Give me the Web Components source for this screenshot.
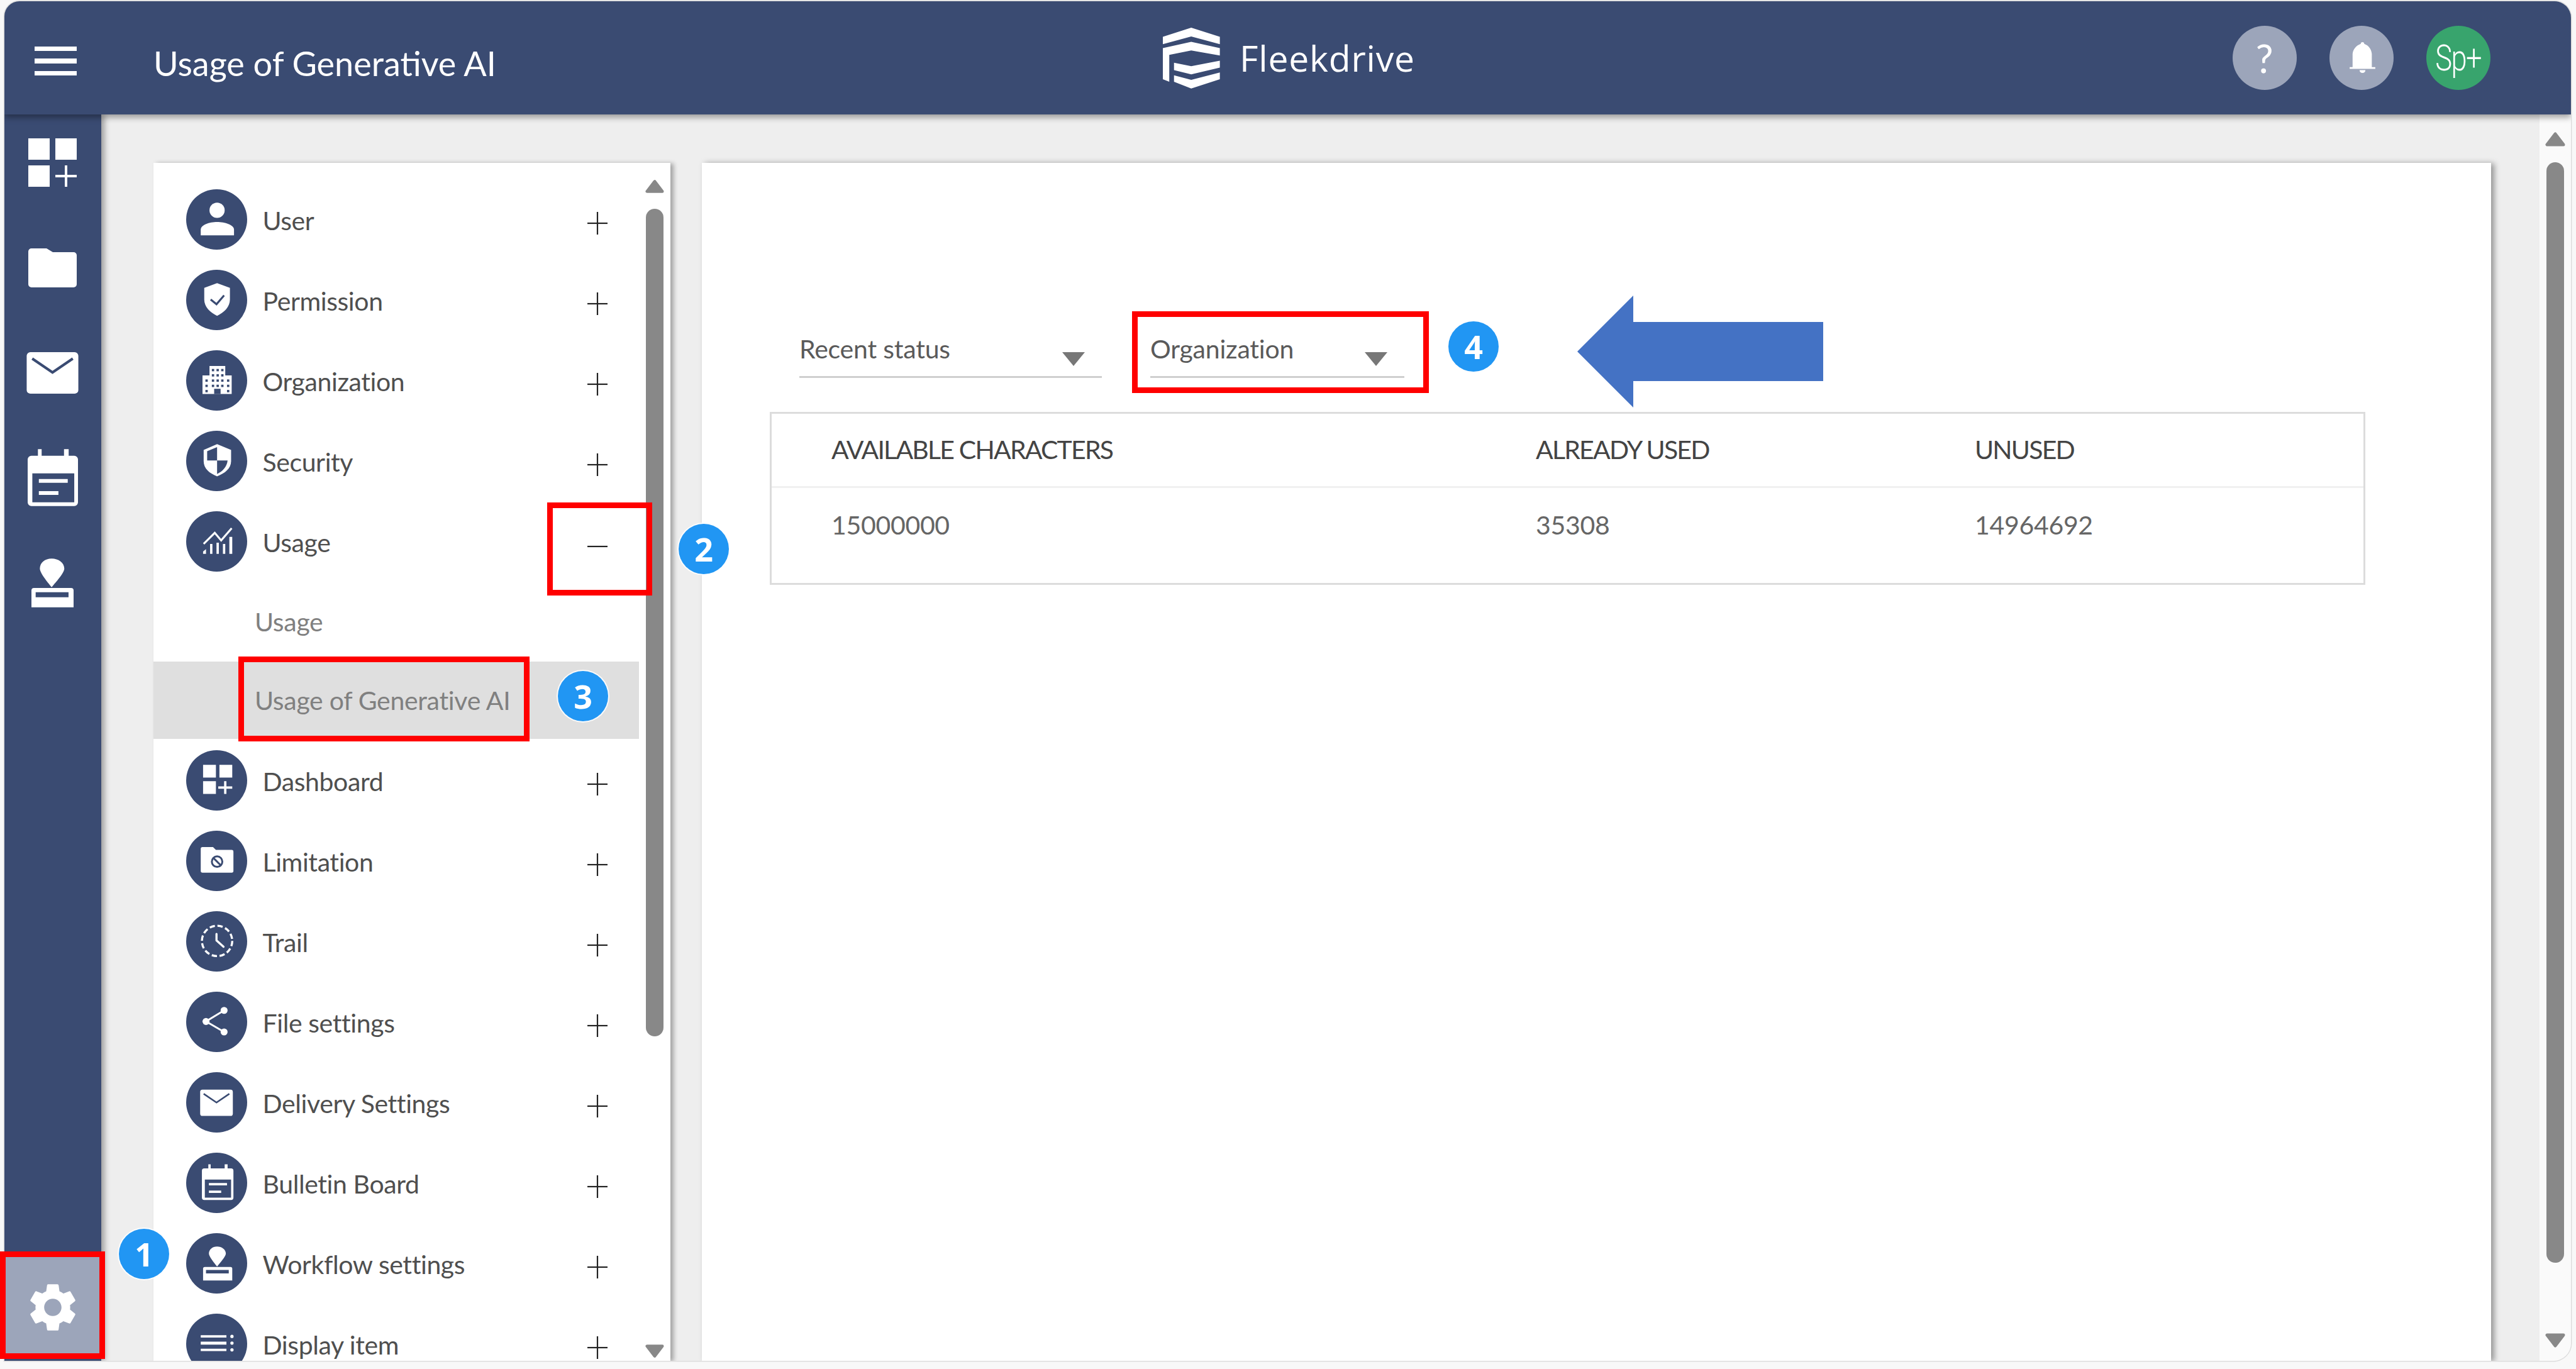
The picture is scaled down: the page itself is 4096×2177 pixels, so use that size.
<!DOCTYPE html>
<html>
<head>
<meta charset="utf-8">
<title>Usage of Generative AI</title>
<style>
  html, body { margin: 0; height: 100%; overflow: hidden; background: #f8f8f8; }
  body { font-family: Lato, "Noto Sans", sans-serif; }
</style>
</head>
<body>
<fd-app>
  <fd-header slot="header">Usage of Generative AI</fd-header>
  <fd-rail slot="rail"></fd-rail>

  <fd-menu-panel slot="menu">
    <fd-menu-item icon="user">User</fd-menu-item>
    <fd-menu-item icon="permission">Permission</fd-menu-item>
    <fd-menu-item icon="organization">Organization</fd-menu-item>
    <fd-menu-item icon="security">Security</fd-menu-item>
    <fd-menu-item icon="usage" open>Usage</fd-menu-item>
    <fd-sub-item>Usage</fd-sub-item>
    <fd-sub-item active>Usage of Generative AI</fd-sub-item>
    <fd-menu-item icon="dashboard">Dashboard</fd-menu-item>
    <fd-menu-item icon="limitation">Limitation</fd-menu-item>
    <fd-menu-item icon="trail">Trail</fd-menu-item>
    <fd-menu-item icon="share">File settings</fd-menu-item>
    <fd-menu-item icon="mail">Delivery Settings</fd-menu-item>
    <fd-menu-item icon="calendar">Bulletin Board</fd-menu-item>
    <fd-menu-item icon="stamp">Workflow settings</fd-menu-item>
    <fd-menu-item icon="display">Display item</fd-menu-item>
  </fd-menu-panel>

  <fd-content-panel slot="content">
    <fd-select slot="filters" style="width:481px">Recent status</fd-select>
    <fd-select slot="filters" style="width:404px">Organization</fd-select>
    <fd-usage-table></fd-usage-table>
  </fd-content-panel>

  <fd-scrollbar slot="scroll" style="--bg:#fafafa;--top:28px;--arrow:23px;--gap:25px;--thumb:1750px;--bottom:21px;--aw:32px"></fd-scrollbar>

  <fd-callout style="left:0;top:1990px;width:167px;height:171px"></fd-callout>
  <fd-callout style="left:870px;top:799px;width:167px;height:148px"></fd-callout>
  <fd-callout style="left:379px;top:1044px;width:463px;height:135px"></fd-callout>
  <fd-callout style="left:1800px;top:495px;width:472px;height:130px"></fd-callout>

  <fd-badge style="left:189px;top:1954px">1</fd-badge>
  <fd-badge style="left:1079px;top:833px">2</fd-badge>
  <fd-badge style="left:887px;top:1067px">3</fd-badge>
  <fd-badge style="left:2303px;top:511px">4</fd-badge>

  <fd-arrow style="left:2508px;top:470px"></fd-arrow>
</fd-app>

<script>
const NAVY = '#3a4b72';

// glyphs are drawn on a 104 box, the size of the round menu icon in the reference
const ICONS = {
  user: `<circle cx="53" cy="36" r="13" fill="#fff"/><path d="M25 79V69c0-8 15-13 28-13s29 5 29 13v10z" fill="#fff"/>`,
  permission: `<path d="M53 23l22 8v20c0 13-10 22-22 28-12-6-22-15-22-28V31z" fill="#fff"/><path d="M42 51l10 8 13-15" fill="none" stroke="${NAVY}" stroke-width="3.4"/>`,
  organization: `<path d="M40 27h27v16h11v32H28V43h12z" fill="#fff"/>
    <g fill="${NAVY}"><rect x="44" y="32" width="4" height="4"/><rect x="52" y="32" width="4" height="4"/><rect x="60" y="32" width="4" height="4"/>
    <rect x="44" y="41" width="4" height="4"/><rect x="52" y="41" width="4" height="4"/><rect x="60" y="41" width="4" height="4"/>
    <rect x="33" y="50" width="4" height="4"/><rect x="44" y="50" width="4" height="4"/><rect x="52" y="50" width="4" height="4"/><rect x="60" y="50" width="4" height="4"/><rect x="70" y="50" width="4" height="4"/>
    <rect x="33" y="59" width="4" height="4"/><rect x="44" y="59" width="4" height="4"/><rect x="52" y="59" width="4" height="4"/><rect x="60" y="59" width="4" height="4"/><rect x="70" y="59" width="4" height="4"/>
    <rect x="33" y="68" width="4" height="4"/><rect x="48" y="66" width="11" height="9"/><rect x="70" y="68" width="4" height="4"/></g>`,
  security: `<path d="M53 23l24 10v19c0 13-11 21-24 26-13-5-23-13-23-26V33z" fill="#fff"/><path d="M53 28l-17 7v16h17zM53 51h18c-1 11-9 19-18 23z" fill="${NAVY}"/>`,
  usage: `<path d="M30 56l19-19 11 13 18-21" fill="none" stroke="#fff" stroke-width="3.4"/>
    <path d="M29 73v-4l5-4v8zM41 73V56h4v17zM52 73V54h4v19zM63 73V56h4v17zM74 73V44h5v29z" fill="#fff"/>`,
  dashboard: `<path d="M29 25h22v22H29zM57 25h22v22H57zM29 53h22v22H29zM65 53h4v9h10v4H69v9h-4v-9H55v-4h10z" fill="#fff"/>`,
  limitation: `<path d="M28 28h18l5 5h27a3 3 0 0 1 3 3v33a3 3 0 0 1-3 3H28a3 3 0 0 1-3-3V31a3 3 0 0 1 3-3z" fill="#fff"/>
    <circle cx="53" cy="53" r="9" fill="none" stroke="${NAVY}" stroke-width="3.2"/><path d="M47 47l12 12" stroke="${NAVY}" stroke-width="3.2"/>`,
  trail: `<circle cx="53" cy="51" r="26" fill="none" stroke="#fff" stroke-width="3.6" stroke-dasharray="9 4.6"/><path d="M52 39v11l12 11" fill="none" stroke="#fff" stroke-width="3.6" stroke-linecap="round"/>`,
  share: `<path d="M65 32L34 51l31 18" fill="none" stroke="#fff" stroke-width="3.2"/><circle cx="65" cy="32" r="6" fill="#fff"/><circle cx="34" cy="51" r="6" fill="#fff"/><circle cx="65" cy="69" r="6" fill="#fff"/>`,
  mail: `<path d="M28 30h48a4 4 0 0 1 4 4v37a4 4 0 0 1-4 4H28a4 4 0 0 1-4-4V34a4 4 0 0 1 4-4z" fill="#fff"/><path d="M30 37l22 15 22-15" fill="none" stroke="${NAVY}" stroke-width="2.8"/>`,
  calendar: `<path d="M38 20h4v7h24v-7h5v7h6a4 4 0 0 1 4 4v46a4 4 0 0 1-4 4H31a4 4 0 0 1-4-4V31a4 4 0 0 1 4-4h7z" fill="#fff"/><path d="M32 46h45v31H32z" fill="${NAVY}"/><path d="M39 52h31v4H39zM39 65h21v4H39z" fill="#fff"/>`,
  stamp: `<path d="M53 23c8 0 15 5 15 12 0 5-10 16-15 22-5-6-14-17-14-22 0-7 6-12 14-12z" fill="#fff"/><path d="M32 58h44a3 3 0 0 1 3 3v20H29V61a3 3 0 0 1 3-3z" fill="#fff"/><path d="M34 63h39v6H34z" fill="${NAVY}"/>`,
  display: `<path d="M25 37h44v4H25zM25 48h44v5H25zM25 60h44v4H25z" fill="#fff"/><circle cx="78.500" cy="39" r="2.800" fill="#fff"/><circle cx="78.500" cy="50.500" r="2.800" fill="#fff"/><circle cx="78.500" cy="62" r="2.800" fill="#fff"/>`
};

class FdApp extends HTMLElement {
  connectedCallback() {
    this.attachShadow({ mode: 'open' });
    this.shadowRoot.innerHTML = `
      <style>
        :host { display: block; position: relative; width: 4096px; height: 2177px; overflow: hidden; }
        .window {
          margin: 2px 0 0 6.5px;
          width: 4081px;
          height: 2162px;
          display: grid;
          grid-template-columns: 154.5px 1fr;
          grid-template-rows: 179.5px 1fr;
          border-radius: 24px 26px 28px 0;
          overflow: hidden;
          background: #eeeeee;
          box-shadow: 0 0 0 1.5px #dddddd;
        }
        .header { grid-column: 1 / 3; position: relative; z-index: 3; display: flex; }
        .rail { position: relative; z-index: 2; display: flex; }
        .main { display: flex; min-height: 0; }
        .menu { display: flex; margin: 77px 0 0 83px; }
        .content { display: flex; margin: 77px 0 0 50.5px; }
        .scroll { display: flex; margin-left: 77px; }
      </style>
      <div class="window">
        <div class="header"><slot name="header"></slot></div>
        <div class="rail"><slot name="rail"></slot></div>
        <div class="main">
          <div class="menu"><slot name="menu"></slot></div>
          <div class="content"><slot name="content"></slot></div>
          <div class="scroll"><slot name="scroll"></slot></div>
        </div>
      </div>
      <slot></slot>
    `;
  }
}

class FdHeader extends HTMLElement {
  connectedCallback() {
    this.attachShadow({ mode: 'open' });
    this.shadowRoot.innerHTML = `
      <style>
        :host {
          flex: 1;
          display: flex;
          align-items: center;
          position: relative;
          background: ${NAVY};
          color: #fff;
          box-shadow: 0 5px 9px rgba(0,0,0,.35);
        }
        .burger { width: 67px; margin: 10px 0 0 48.500px; display: flex; flex-direction: column; gap: 12px; }
        .burger i { display: block; height: 7.500px; background: #fff; }
        h1 { margin: 18px 0 0 122px; font: 400 54px/64px Lato, sans-serif; white-space: nowrap; }
        .logo { position: absolute; left: 1842.500px; top: 41px; display: flex; align-items: center; gap: 31px; }
        .logo svg { width: 91px; height: 98.500px; display: block; }
        .logo span { font: 400 57px/70px "Open Sans", sans-serif; letter-spacing: .8px; }
        .tools { margin-left: auto; margin-right: 128px; display: flex; gap: 52px; }
        .tool {
          width: 102px; height: 102px; border-radius: 50%;
          background: #9ca5ba;
          display: flex; align-items: center; justify-content: center;
          font: 400 62px/1 Lato, sans-serif;
        }
        .tool.me { background: #38a46d; }
        .tool.me span { font: 300 58px/1 Roboto, sans-serif; letter-spacing: -2px; transform: scaleX(.78); white-space: nowrap; }
        .tool svg { width: 41px; height: 50px; margin-left: 4px; }
      </style>
      <div class="burger"><i></i><i></i><i></i></div>
      <h1><slot></slot></h1>
      <div class="logo">
        <svg viewBox="0 0 98 106" fill="#fff">
          <path d="M48.600 1L0 16.700v12.600L48.600 16l49 13.300V16.700z"/>
          <path d="M48.600 25.300L0 36v53.300l11 4.400v-46L48.600 40l49 8.700V36z"/>
          <path d="M19.100 61l29.500 6 49-9.300v11.600L48.600 81l-29.500-7.300z"/>
          <path d="M19.100 82.700l29.500 7.600 49-12.600v11.600l-49 16-29.500-11.600z"/>
        </svg>
        <span>Fleekdrive</span>
      </div>
      <div class="tools">
        <div class="tool">?</div>
        <div class="tool">
          <svg viewBox="0 0 44 54" fill="#fff"><path d="M22 0c2 0 3 1 3 3 8 3 12 9 13 17v23h6v3H0v-3h5V20C6 12 11 6 19 3c0-2 1-3 3-3z"/><path d="M17 48h10c0 3-2 5-5 5s-5-2-5-5z"/></svg>
        </div>
        <div class="tool me"><span>Sp+</span></div>
      </div>
    `;
  }
}

class FdRail extends HTMLElement {
  connectedCallback() {
    this.attachShadow({ mode: 'open' });
    this.shadowRoot.innerHTML = `
      <style>
        :host {
          flex: 1;
          display: flex;
          flex-direction: column;
          background: ${NAVY};
          box-shadow: 5px 0 9px rgba(0,0,0,.35);
        }
        .item { height: 154px; margin-bottom: 13px; display: flex; align-items: center; justify-content: center; }
        .gear { margin-top: auto; margin-bottom: 12px; height: 153px; background: #9ca5ba; }
        svg { display: block; }
      </style>
      <div class="item">
        <svg width="77" height="77" viewBox="0 0 77 77" fill="#fff"><path d="M0 0h34v34H0zM43 0h34v34H43zM0 43h34v34H0zM58 43h4v15h15v4H62v15h-4V62H43v-4h15z"/></svg>
      </div>
      <div class="item">
        <svg width="77" height="62" viewBox="0 0 77 62" fill="#fff"><path d="M5 0h24l10 6h33a5 5 0 0 1 5 5v46a5 5 0 0 1-5 5H5a5 5 0 0 1-5-5V5a5 5 0 0 1 5-5z"/></svg>
      </div>
      <div class="item"><svg width="83" height="66" viewBox="24 30 56 45">${ICONS.mail}</svg></div>
      <div class="item"><svg width="80" height="91" viewBox="27 20 54 61">${ICONS.calendar}</svg></div>
      <div class="item"><svg width="67" height="78" viewBox="29 23 50 58">${ICONS.stamp}</svg></div>
      <div class="item gear">
        <svg width="92" height="92" viewBox="0 0 24 24" fill="#fff" style="margin-top:7px"><path d="M19.140 12.940c.04-.3.06-.61.06-.94 0-.32-.02-.64-.07-.94l2.030-1.580a.49.49 0 0 0 .12-.61l-1.920-3.320a.488.488 0 0 0-.59-.22l-2.390.96c-.5-.38-1.030-.7-1.620-.94l-.36-2.540a.484.484 0 0 0-.48-.41h-3.840c-.24 0-.43.17-.47.41l-.36 2.540c-.59.24-1.130.57-1.620.94l-2.390-.96c-.22-.08-.47 0-.59.22L2.740 8.870c-.12.21-.08.47.12.61l2.030 1.580c-.05.3-.09.63-.09.94s.02.64.07.94l-2.030 1.580a.49.49 0 0 0-.12.61l1.920 3.320c.12.22.37.29.59.22l2.390-.96c.5.38 1.030.7 1.620.94l.36 2.540c.05.24.24.41.48.41h3.840c.24 0 .44-.17.47-.41l.36-2.540c.59-.24 1.130-.56 1.620-.94l2.390.96c.22.08.47 0 .59-.22l1.920-3.320c.12-.22.07-.47-.12-.61l-2.010-1.580zM12 15.600c-1.980 0-3.600-1.620-3.600-3.600s1.620-3.600 3.600-3.600 3.600 1.620 3.600 3.600-1.620 3.600-3.600 3.600z"/></svg>
      </div>
    `;
  }
}

class FdMenuPanel extends HTMLElement {
  connectedCallback() {
    this.attachShadow({ mode: 'open' });
    this.shadowRoot.innerHTML = `
      <style>
        :host {
          width: 821.5px;
          display: flex;
          background: #fff;
          box-shadow: 5px 1px 7px rgba(0,0,0,.32);
          overflow: hidden;
        }
        .list { width: 772px; padding-top: 26.5px; box-sizing: border-box; display: flex; flex-direction: column; flex: none; }
      </style>
      <div class="list"><slot></slot></div>
      <fd-scrollbar style="--bg:#fff;--top:24px;--arrow:27px;--gap:22px;--thumb:1316px;--bottom:2px;--aw:30px;width:49.5px"></fd-scrollbar>
    `;
  }
}

class FdMenuItem extends HTMLElement {
  connectedCallback() {
    const open = this.hasAttribute('open');
    this.attachShadow({ mode: 'open' });
    this.shadowRoot.innerHTML = `
      <style>
        :host {
          display: flex;
          align-items: center;
          flex: none;
          height: 128px;
          padding: 0 50px 0 52px;
          color: #4f4f4f;
          font: 400 41px/50px Lato, sans-serif;
          letter-spacing: -.4px;
        }
        .dot { width: 96.5px; height: 96.5px; border-radius: 50%; background: ${NAVY}; flex: none; }
        svg.glyph { display: block; width: 96.5px; height: 96.5px; }
        .label { margin: 3px 0 0 25px; flex: 1; }
        .toggle { width: 32px; height: 36px; margin-top: ${open ? 16 : 12}px; flex: none; }
      </style>
      <div class="dot"><svg class="glyph" viewBox="0 0 104 104">${ICONS[this.getAttribute('icon')]}</svg></div>
      <div class="label"><slot></slot></div>
      <svg class="toggle" viewBox="0 0 32 36" stroke="#222" stroke-width="2.2">
        <path d="M0 18h32"/>${open ? '' : '<path d="M16 0v36"/>'}
      </svg>
    `;
  }
}

class FdSubItem extends HTMLElement {
  connectedCallback() {
    const active = this.hasAttribute('active');
    this.attachShadow({ mode: 'open' });
    this.shadowRoot.innerHTML = `
      <style>
        :host {
          display: flex;
          align-items: center;
          flex: none;
          height: ${active ? 123 : 127}px;
          margin-bottom: ${active ? 2 : 0}px;
          padding-left: 161px;
          color: #808080;
          background: ${active ? '#dfdfdf' : 'transparent'};
          font: 400 41px/50px Lato, sans-serif;
          letter-spacing: -.3px;
        }
      </style>
      <slot></slot>
    `;
  }
}

class FdScrollbar extends HTMLElement {
  connectedCallback() {
    this.attachShadow({ mode: 'open' });
    this.shadowRoot.innerHTML = `
      <style>
        :host {
          display: flex;
          flex-direction: column;
          align-items: center;
          flex: none;
          width: 49.5px;
          box-sizing: border-box;
          padding: var(--top) 0 var(--bottom);
          background: var(--bg);
        }
        svg { width: var(--aw); height: var(--arrow); display: block; flex: none; }
        .thumb { width: 28px; height: var(--thumb); margin-top: var(--gap); border-radius: 14px; background: #888888; flex: none; }
        .down { margin-top: auto; }
      </style>
      <svg viewBox="0 0 32 23"><path d="M16 3L3 20h26z" fill="#888" stroke="#888" stroke-width="5" stroke-linejoin="round"/></svg>
      <div class="thumb"></div>
      <svg class="down" viewBox="0 0 32 23"><path d="M3 3h26L16 20z" fill="#888" stroke="#888" stroke-width="5" stroke-linejoin="round"/></svg>
    `;
  }
}

class FdContentPanel extends HTMLElement {
  connectedCallback() {
    this.attachShadow({ mode: 'open' });
    this.shadowRoot.innerHTML = `
      <style>
        :host {
          width: 2845px;
          display: block;
          box-sizing: border-box;
          padding: 278.5px 200px 0 108px;
          background: #fff;
          box-shadow: 5px 1px 9px rgba(0,0,0,.38);
        }
        .filters { display: flex; gap: 77px; margin: 0 0 53.5px 47px; }
      </style>
      <div class="filters"><slot name="filters"></slot></div>
      <slot></slot>
    `;
  }
}

class FdSelect extends HTMLElement {
  connectedCallback() {
    this.attachShadow({ mode: 'open' });
    this.shadowRoot.innerHTML = `
      <style>
        :host {
          display: flex;
          justify-content: space-between;
          box-sizing: border-box;
          height: 64px;
          border-bottom: 3px solid #cfcfcf;
          color: #5a5a5a;
          font: 400 41px/36px Lato, sans-serif;
          letter-spacing: -.2px;
        }
        .caret { width: 36px; height: 22px; margin: 23px 27px 0 0; }
      </style>
      <slot></slot>
      <svg class="caret" viewBox="0 0 36 22"><path d="M0 0h36L18 22z" fill="#777"/></svg>
    `;
  }
}

class FdUsageTable extends HTMLElement {
  connectedCallback() {
    this.attachShadow({ mode: 'open' });
    this.shadowRoot.innerHTML = `
      <style>
        :host {
          display: block;
          box-sizing: border-box;
          height: 275px;
          border: 3px solid #dcdcdc;
          font: 400 41px/48px Lato, sans-serif;
        }
        .row { display: grid; grid-template-columns: 1120px 698px 1fr; padding-left: 95px; }
        .head { height: 118px; align-items: center; box-sizing: border-box; border-bottom: 3px solid #f0f0f0; color: #444; letter-spacing: -1.8px; }
        .body { padding-top: 35px; color: #666; letter-spacing: -.3px; }
      </style>
      <div class="row head"><div>AVAILABLE CHARACTERS</div><div>ALREADY USED</div><div>UNUSED</div></div>
      <div class="row body"><div>15000000</div><div>35308</div><div>14964692</div></div>
    `;
  }
}

// annotations the screenshot's author put over the page
class FdCallout extends HTMLElement {
  connectedCallback() {
    this.attachShadow({ mode: 'open' });
    this.shadowRoot.innerHTML = `
      <style>
        :host { position: absolute; box-sizing: border-box; border: 9px solid #ff0000; z-index: 5; }
      </style>
    `;
  }
}

class FdBadge extends HTMLElement {
  connectedCallback() {
    this.attachShadow({ mode: 'open' });
    this.shadowRoot.innerHTML = `
      <style>
        :host {
          position: absolute;
          z-index: 6;
          width: 80px;
          height: 80px;
          border-radius: 50%;
          background: #2196f3;
          box-shadow: 0 0 0 2px rgba(255,255,255,.85);
          color: #fff;
          display: flex;
          align-items: center;
          justify-content: center;
          font: 700 52px/1 "Open Sans", sans-serif;
        }
      </style>
      <slot></slot>
    `;
  }
}

class FdArrow extends HTMLElement {
  connectedCallback() {
    this.attachShadow({ mode: 'open' });
    this.shadowRoot.innerHTML = `
      <style>
        :host { position: absolute; z-index: 6; width: 391px; height: 178px; }
        svg { display: block; }
      </style>
      <svg width="391" height="178" viewBox="0 0 391 178"><path d="M0 89L89 0v42h302v94H89v42z" fill="#4472c4"/></svg>
    `;
  }
}

customElements.define('fd-scrollbar', FdScrollbar);
customElements.define('fd-header', FdHeader);
customElements.define('fd-rail', FdRail);
customElements.define('fd-menu-panel', FdMenuPanel);
customElements.define('fd-menu-item', FdMenuItem);
customElements.define('fd-sub-item', FdSubItem);
customElements.define('fd-content-panel', FdContentPanel);
customElements.define('fd-select', FdSelect);
customElements.define('fd-usage-table', FdUsageTable);
customElements.define('fd-callout', FdCallout);
customElements.define('fd-badge', FdBadge);
customElements.define('fd-arrow', FdArrow);
customElements.define('fd-app', FdApp);
</script>
</body>
</html>
